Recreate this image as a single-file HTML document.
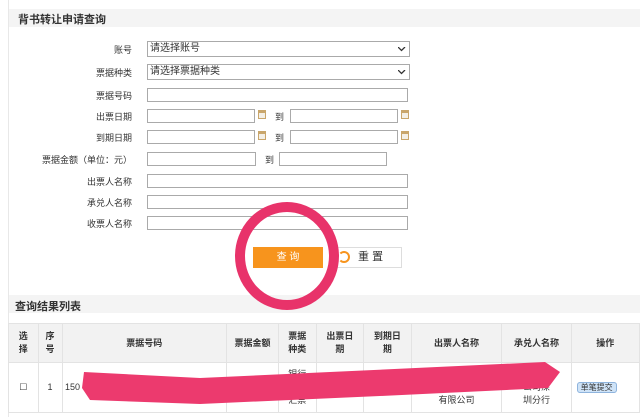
<!DOCTYPE html><html><head><meta charset="utf-8"><style>
body{margin:0;width:640px;height:417px;overflow:hidden;background:#fff;font-family:"Liberation Sans","Noto Sans CJK SC",sans-serif;font-size:9px;color:#333;position:relative}
.a{position:absolute}
.lb{position:absolute;width:120px;text-align:right;left:12px}
.in{position:absolute;border:1px solid #aaa;background:#fff;box-sizing:border-box;height:14px}
.sel{font-size:10px;padding-left:2px;line-height:13px;color:#333}
.cal{position:absolute;width:8px;height:9px;border:1px solid #c9a66b;background:#f3efe6;box-sizing:border-box;border-top:3px solid #c9a66b}
table{border-collapse:collapse;position:absolute;left:8px;top:323px;table-layout:fixed}
td{border:1px solid #e3e3e3;text-align:center;font-size:9px;padding:0;line-height:13px;overflow:hidden;white-space:nowrap}
</style></head><body>
<div class="a" style="left:8px;top:0;width:1px;height:417px;background:#e8e8e8"></div>
<div class="a" style="left:9px;top:9px;width:631px;height:18px;background:#f4f4f4"></div>
<div class="a" style="left:18px;top:11px;font-size:11px;font-weight:bold;color:#333">背书转让申请查询</div>
<svg width="0" height="0" style="position:absolute"><defs><path id="ar" d="M0 0 L3.5 3.5 L7 0" fill="none" stroke="#333" stroke-width="1.3"/></defs></svg>
<div class="lb" style="top:43px">账号</div><div class="in sel" style="left:147px;top:41px;width:263px;height:16px">请选择账号<svg class="a" style="right:3px;top:5px" width="8" height="5"><use href="#ar"/></svg></div>
<div class="lb" style="top:66px">票据种类</div><div class="in sel" style="left:147px;top:64px;width:263px;height:16px">请选择票据种类<svg class="a" style="right:3px;top:5px" width="8" height="5"><use href="#ar"/></svg></div>
<div class="lb" style="top:89px">票据号码</div><div class="in" style="left:147px;top:88px;width:261px"></div>
<div class="lb" style="top:110px">出票日期</div><div class="in" style="left:147px;top:109px;width:108px"></div><div class="cal" style="left:258px;top:110px"></div><div class="a" style="left:275px;top:110px">到</div><div class="in" style="left:290px;top:109px;width:108px"></div><div class="cal" style="left:401px;top:110px"></div>
<div class="lb" style="top:131px">到期日期</div><div class="in" style="left:147px;top:130px;width:108px"></div><div class="cal" style="left:258px;top:131px"></div><div class="a" style="left:275px;top:131px">到</div><div class="in" style="left:290px;top:130px;width:108px"></div><div class="cal" style="left:401px;top:131px"></div>
<div class="lb" style="top:153px">票据金额（单位：元）</div><div class="in" style="left:147px;top:152px;width:109px"></div><div class="a" style="left:265px;top:153px">到</div><div class="in" style="left:279px;top:152px;width:108px"></div>
<div class="lb" style="top:175px">出票人名称</div><div class="in" style="left:147px;top:174px;width:261px"></div>
<div class="lb" style="top:196px">承兑人名称</div><div class="in" style="left:147px;top:195px;width:261px"></div>
<div class="lb" style="top:217px">收票人名称</div><div class="in" style="left:147px;top:216px;width:261px"></div>
<div class="a" style="left:253px;top:247px;width:70px;height:21px;background:#f7941d;color:#fff;font-size:10px;text-align:center;line-height:21px">查 询</div>
<div class="a" style="left:333px;top:247px;width:69px;height:21px;border:1px solid #ddd;box-sizing:border-box;font-size:11px;line-height:19px;text-align:center">&nbsp;&nbsp;重 置</div>
<div class="a" style="left:338px;top:251px;width:8px;height:8px;border:2px solid #f7941d;border-radius:50%;border-left-color:transparent"></div>
<div class="a" style="left:9px;top:295px;width:631px;height:18px;background:#f4f4f4"></div>
<div class="a" style="left:15px;top:298px;font-size:11px;font-weight:bold">查询结果列表</div>
<table><colgroup><col style="width:31px"><col style="width:25px"><col style="width:174px"><col style="width:53px"><col style="width:39px"><col style="width:49px"><col style="width:49px"><col style="width:94px"><col style="width:71px"><col style="width:70px"></colgroup>
<tr style="height:39px;background:#f2f2f2;font-weight:bold"><td>选<br>择</td><td>序<br>号</td><td>票据号码</td><td>票据金额</td><td>票据<br>种类</td><td>出票日<br>期</td><td>到期日<br>期</td><td>出票人名称</td><td>承兑人名称</td><td>操作</td></tr>
<tr style="height:50px"><td>☐</td><td>1</td><td style="text-align:left">&nbsp;150</td><td></td><td>银行<br><br>汇票</td><td></td><td></td><td><br><br>有限公司</td><td>行(中<br>公司深<br>圳分行</td><td style="text-align:left">&nbsp;&nbsp;<span style="background:#cfe3f7;border:1px solid #8fb4dd;border-radius:3px;padding:0 3px;font-size:8px">单笔提交</span></td></tr></table>
<svg class="a" style="left:0;top:0" width="640" height="417"><ellipse cx="287" cy="256" rx="47" ry="49" fill="none" stroke="#e8336a" stroke-width="10"/>
<path d="M84 372 L200 378 L330 372 L545 362 L560 372 L548 388 L380 396 L200 404 L90 400 L82 388 Z" fill="#ec3a6e"/></svg>
</body></html>
